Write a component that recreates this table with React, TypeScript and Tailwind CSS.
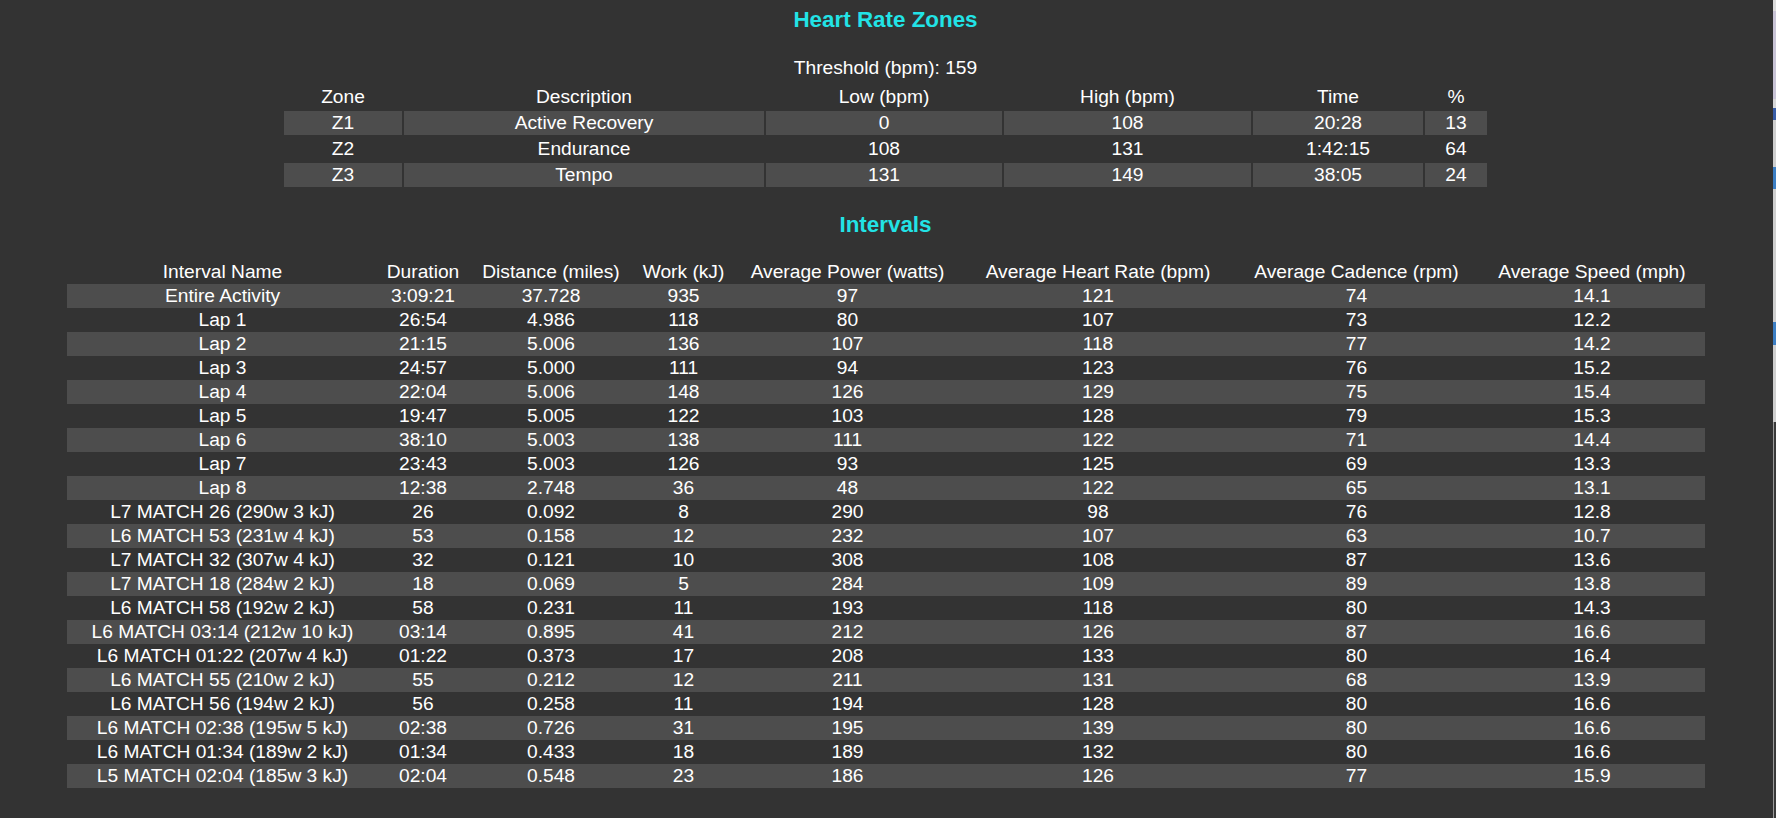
import React from "react";

const zones = [
  ["Z1", "Active Recovery", "0", "108", "20:28", "13"],
  ["Z2", "Endurance", "108", "131", "1:42:15", "64"],
  ["Z3", "Tempo", "131", "149", "38:05", "24"],
];

const intervals = [
  ["Entire Activity", "3:09:21", "37.728", "935", "97", "121", "74", "14.1"],
  ["Lap 1", "26:54", "4.986", "118", "80", "107", "73", "12.2"],
  ["Lap 2", "21:15", "5.006", "136", "107", "118", "77", "14.2"],
  ["Lap 3", "24:57", "5.000", "111", "94", "123", "76", "15.2"],
  ["Lap 4", "22:04", "5.006", "148", "126", "129", "75", "15.4"],
  ["Lap 5", "19:47", "5.005", "122", "103", "128", "79", "15.3"],
  ["Lap 6", "38:10", "5.003", "138", "111", "122", "71", "14.4"],
  ["Lap 7", "23:43", "5.003", "126", "93", "125", "69", "13.3"],
  ["Lap 8", "12:38", "2.748", "36", "48", "122", "65", "13.1"],
  ["L7 MATCH 26 (290w 3 kJ)", "26", "0.092", "8", "290", "98", "76", "12.8"],
  ["L6 MATCH 53 (231w 4 kJ)", "53", "0.158", "12", "232", "107", "63", "10.7"],
  ["L7 MATCH 32 (307w 4 kJ)", "32", "0.121", "10", "308", "108", "87", "13.6"],
  ["L7 MATCH 18 (284w 2 kJ)", "18", "0.069", "5", "284", "109", "89", "13.8"],
  ["L6 MATCH 58 (192w 2 kJ)", "58", "0.231", "11", "193", "118", "80", "14.3"],
  ["L6 MATCH 03:14 (212w 10 kJ)", "03:14", "0.895", "41", "212", "126", "87", "16.6"],
  ["L6 MATCH 01:22 (207w 4 kJ)", "01:22", "0.373", "17", "208", "133", "80", "16.4"],
  ["L6 MATCH 55 (210w 2 kJ)", "55", "0.212", "12", "211", "131", "68", "13.9"],
  ["L6 MATCH 56 (194w 2 kJ)", "56", "0.258", "11", "194", "128", "80", "16.6"],
  ["L6 MATCH 02:38 (195w 5 kJ)", "02:38", "0.726", "31", "195", "139", "80", "16.6"],
  ["L6 MATCH 01:34 (189w 2 kJ)", "01:34", "0.433", "18", "189", "132", "80", "16.6"],
  ["L5 MATCH 02:04 (185w 3 kJ)", "02:04", "0.548", "23", "186", "126", "77", "15.9"],
];

const zoneHeaders = ["Zone", "Description", "Low (bpm)", "High (bpm)", "Time", "%"];
const zoneWidths = [118, 360, 236, 247, 170, 62];

const intHeaders = [
  "Interval Name",
  "Duration",
  "Distance (miles)",
  "Work (kJ)",
  "Average Power (watts)",
  "Average Heart Rate (bpm)",
  "Average Cadence (rpm)",
  "Average Speed (mph)",
];
const intWidths = [312, 89, 167, 98, 230, 271, 246, 225];

export default function App() {
  return (
    <div className="flex w-[1776px] h-[818px] overflow-hidden bg-[#333333] font-['Liberation_Sans',Arial,sans-serif]">
      <div className="flex-1 pr-[2px] flex flex-col items-center text-white text-[19.2px]">
        <h3 className="mt-[8px] h-6 leading-6 text-[22.4px] font-bold text-[#22e3e6]">
          Heart Rate Zones
        </h3>
        <div className="mt-[24px] h-6 leading-6">Threshold (bpm): 159</div>
        <table className="mt-[3px] w-[1207px] table-fixed border-separate border-spacing-[2px]">
          <colgroup>
            {zoneWidths.map((w, i) => (
              <col key={i} style={{ width: w }} />
            ))}
          </colgroup>
          <thead>
            <tr>
              {zoneHeaders.map((h) => (
                <th key={h} className="h-6 p-0 leading-6 font-normal text-center">
                  {h}
                </th>
              ))}
            </tr>
          </thead>
          <tbody>
            {zones.map((r, ri) => (
              <tr key={ri}>
                {r.map((c, ci) => (
                  <td
                    key={ci}
                    className={
                      ri % 2 === 0
                        ? "h-6 p-0 leading-6 text-center bg-[#4d4d4d]"
                        : "h-6 p-0 leading-6 text-center"
                    }
                  >
                    {c}
                  </td>
                ))}
              </tr>
            ))}
          </tbody>
        </table>
        <h3 className="mt-[24px] h-6 leading-6 text-[22.4px] font-bold text-[#22e3e6]">
          Intervals
        </h3>
        <table className="mt-[23px] w-[1638px] table-fixed border-collapse">
          <colgroup>
            {intWidths.map((w, i) => (
              <col key={i} style={{ width: w }} />
            ))}
          </colgroup>
          <thead>
            <tr>
              {intHeaders.map((h) => (
                <th key={h} className="h-6 p-0 leading-6 font-normal text-center whitespace-nowrap">
                  {h}
                </th>
              ))}
            </tr>
          </thead>
          <tbody>
            {intervals.map((r, ri) => (
              <tr key={ri} className={ri % 2 === 0 ? "bg-[#4d4d4d]" : ""}>
                {r.map((c, ci) => (
                  <td key={ci} className="h-6 p-0 leading-6 text-center whitespace-nowrap">
                    {c}
                  </td>
                ))}
              </tr>
            ))}
          </tbody>
        </table>
      </div>
      <div className="w-[3px] flex flex-col">
        <div className="h-[11px] bg-[#dcdcdc]" />
        <div className="h-[88px] bg-[#c9c4d6]" />
        <div className="h-[9px] bg-[#d8d8d8]" />
        <div className="h-[12px] bg-[#3a5ea8]" />
        <div className="h-[47px] bg-[#cfcfcf]" />
        <div className="h-[22px] bg-[#3d7fc4]" />
        <div className="h-[133px] bg-[#cfcfcf]" />
        <div className="h-[23px] bg-[#3d7fc4]" />
        <div className="h-[77px] bg-[#cfcfcf]" />
        <div className="flex-1 bg-[#3a3a3a] border-l border-[#9a9a9a]" />
      </div>
    </div>
  );
}
